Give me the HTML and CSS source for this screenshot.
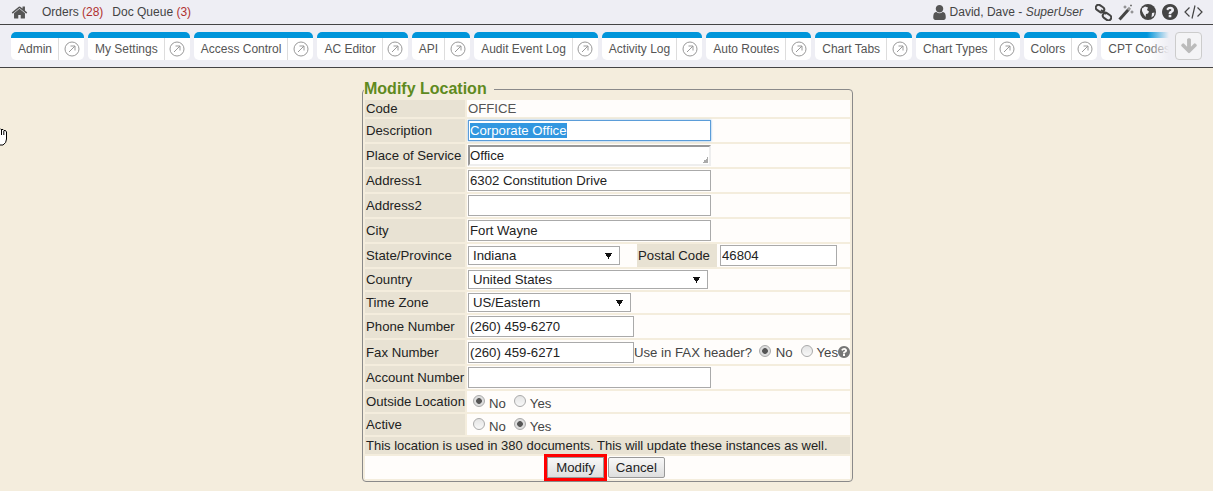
FILE: index.html
```html
<!DOCTYPE html>
<html>
<head>
    <meta charset="UTF-8">
    <link rel="stylesheet" href="styles.css">
</head>
<body>
    <div class="topbar">
        <div class="topbar-left">
            <svg class="home-icon" viewBox="0 0 1792 1792"><path d="M1472 992v480q0 26-19 45t-45 19h-384v-384h-256v384h-384q-26 0-45-19t-19-45v-480q0-1 .5-3t.5-3l575-474 575 474q1 2 1 6zm223-69l-62 74q-8 9-21 11h-3q-13 0-21-7l-692-577-692 577q-12 8-24 7-13-2-21-11l-62-74q-8-10-7-23.5t11-21.5l719-599q32-26 76-26t76 26l244 204v-195q0-14 9-23t23-9h192q14 0 23 9t9 23v408l219 182q10 8 11 21.5t-7 23.5z"/></svg>
            <a class="top-link">Orders <span class="count">(28)</span></a>
            <a class="top-link">Doc Queue <span class="count">(3)</span></a>
        </div>
        <div class="topbar-right">
            <svg class="user-icon" viewBox="256 128 1280 1536"><path d="M1536 1399q0 109-62.5 187t-150.5 78h-854q-88 0-150.5-78t-62.5-187q0-85 8.5-160.5t31.5-152 58.5-131 94-89 134.5-34.5q131 128 313 128t313-128q76 0 134.5 34.5t94 89 58.5 131 31.5 152 8.5 160.5zm-256-887q0 159-112.5 271.5t-271.5 112.5-271.5-112.5-112.5-271.5 112.5-271.5 271.5-112.5 271.5 112.5 112.5 271.5z"/></svg>
            <span class="user-name">David, Dave - <em>SuperUser</em></span>
            <div class="tools">
                <svg class="tool" width="17" height="17" viewBox="0 0 17 17"><g class="chain"><rect x="0.5" y="1.8" width="9" height="5.6" rx="2.8" transform="rotate(35 5 4.6)"/><rect x="7.5" y="9.8" width="9" height="5.6" rx="2.8" transform="rotate(35 12 12.6)"/><path d="M6 6l5 4"/></g></svg>
                <svg class="tool" width="16" height="17" viewBox="0 0 16 17"><path class="wand" d="M1.5 15.5L10.5 5.5"/><path class="wand-tip" d="M10 6L12 3.8"/><path class="spark" d="M7 1.5v3M5.5 3h3M14 6.500v3M12.500 8h3M13 .5v2M12 1.500h2"/></svg>
                <svg class="tool" width="16" height="16" viewBox="0 0 16 16"><circle cx="8" cy="8" r="8"/><path class="land" d="M2 4.500l3-2 3 1-1 2.500 2 1.500-1 2-2 .5-.5 3-2-3-1.500-3zM12 9l2.500-.5-.5 3-2.500 2z"/></svg>
                <svg class="tool" width="16" height="16" viewBox="128 128 1536 1536"><path d="M1024 1376v-192q0-14-9-23t-23-9h-192q-14 0-23 9t-9 23v192q0 14 9 23t23 9h192q14 0 23-9t9-23zm256-672q0-88-55.5-163t-138.5-116-170-41q-243 0-371 213-15 24 8 42l132 100q7 6 19 6 16 0 25-12 53-68 86-92 34-24 86-24 48 0 85.5 26t37.5 59q0 38-20 61t-68 45q-63 28-115.5 86.5t-52.5 125.500v36q0 14 9 23t23 9h192q14 0 23-9t9-23q0-19 21.500-49.500t54.500-49.500q32-18 49-28.500t46-35 44.500-48 28-60.500 12.500-81zm384 192q0 209-103 385.500t-279.500 279.500-385.500 103-385.500-103-279.500-279.500-103-385.500 103-385.500 279.500-279.500 385.500-103 385.500 103 279.500 279.500 103 385.500z"/></svg>
                <svg class="tool" width="19" height="16" viewBox="0 0 19 16"><path class="code" d="M5.500 3.500L1 8l4.500 4.500M13.500 3.500L18 8l-4.500 4.500M11 1.500L8 14.500"/></svg>
            </div>
        </div>
    </div>

    <div class="tabbar">
        <div class="tabs">
            <div class="tab"><span class="tab-name">Admin</span><span class="tab-open"><svg viewBox="0 0 16 16"><circle cx="8" cy="8" r="7"/><path d="M5 11l6-6M6.500 5H11v4.500"/></svg></span></div>
            <div class="tab"><span class="tab-name">My Settings</span><span class="tab-open"><svg viewBox="0 0 16 16"><circle cx="8" cy="8" r="7"/><path d="M5 11l6-6M6.500 5H11v4.500"/></svg></span></div>
            <div class="tab"><span class="tab-name">Access Control</span><span class="tab-open"><svg viewBox="0 0 16 16"><circle cx="8" cy="8" r="7"/><path d="M5 11l6-6M6.500 5H11v4.500"/></svg></span></div>
            <div class="tab"><span class="tab-name">AC Editor</span><span class="tab-open"><svg viewBox="0 0 16 16"><circle cx="8" cy="8" r="7"/><path d="M5 11l6-6M6.500 5H11v4.500"/></svg></span></div>
            <div class="tab"><span class="tab-name">API</span><span class="tab-open"><svg viewBox="0 0 16 16"><circle cx="8" cy="8" r="7"/><path d="M5 11l6-6M6.500 5H11v4.500"/></svg></span></div>
            <div class="tab"><span class="tab-name">Audit Event Log</span><span class="tab-open"><svg viewBox="0 0 16 16"><circle cx="8" cy="8" r="7"/><path d="M5 11l6-6M6.500 5H11v4.500"/></svg></span></div>
            <div class="tab"><span class="tab-name">Activity Log</span><span class="tab-open"><svg viewBox="0 0 16 16"><circle cx="8" cy="8" r="7"/><path d="M5 11l6-6M6.500 5H11v4.500"/></svg></span></div>
            <div class="tab"><span class="tab-name">Auto Routes</span><span class="tab-open"><svg viewBox="0 0 16 16"><circle cx="8" cy="8" r="7"/><path d="M5 11l6-6M6.500 5H11v4.500"/></svg></span></div>
            <div class="tab"><span class="tab-name">Chart Tabs</span><span class="tab-open"><svg viewBox="0 0 16 16"><circle cx="8" cy="8" r="7"/><path d="M5 11l6-6M6.500 5H11v4.500"/></svg></span></div>
            <div class="tab"><span class="tab-name">Chart Types</span><span class="tab-open"><svg viewBox="0 0 16 16"><circle cx="8" cy="8" r="7"/><path d="M5 11l6-6M6.500 5H11v4.500"/></svg></span></div>
            <div class="tab"><span class="tab-name">Colors</span><span class="tab-open"><svg viewBox="0 0 16 16"><circle cx="8" cy="8" r="7"/><path d="M5 11l6-6M6.500 5H11v4.500"/></svg></span></div>
            <div class="tab"><span class="tab-name">CPT Codes</span><span class="tab-open"><svg viewBox="0 0 16 16"><circle cx="8" cy="8" r="7"/><path d="M5 11l6-6M6.500 5H11v4.500"/></svg></span></div>
        </div>
        <button class="tabs-more"><svg viewBox="0 0 1792 1792"><path d="M1675 832q0 53-37 90l-651 652q-39 37-91 37-53 0-90-37l-651-652q-38-36-38-90 0-53 38-91l74-75q39-37 91-37 53 0 90 37l294 294v-704q0-52 38-90t90-38h128q52 0 90 38t38 90v704l294-294q37-37 90-37 52 0 91 37l75 75q37 39 37 91z"/></svg></button>
    </div>

    <svg class="hand-cursor" width="8" height="19" viewBox="0 0 8 19"><path d="M-3 .500h3l1 1 2 0 1 1 1.500 0 1 1.500v7q0 4-3.500 6h-6z"/><path d="M1.500 2v5M3.800 3v4"/></svg>

    <div class="content">
        <fieldset class="panel">
            <legend>Modify Location</legend>
            <table class="form-table">
                <tr class="row-code">
                    <td class="label">Code</td>
                    <td class="value code-value">OFFICE</td>
                </tr>
                <tr>
                    <td class="label">Description</td>
                    <td class="value"><input class="wide" id="description" type="text" value="Corporate Office"></td>
                </tr>
                <tr>
                    <td class="label">Place of Service</td>
                    <td class="value"><textarea class="wide" rows="1">Office</textarea></td>
                </tr>
                <tr>
                    <td class="label">Address1</td>
                    <td class="value"><input class="wide" type="text" value="6302 Constitution Drive"></td>
                </tr>
                <tr>
                    <td class="label">Address2</td>
                    <td class="value"><input class="wide" type="text"></td>
                </tr>
                <tr>
                    <td class="label">City</td>
                    <td class="value"><input class="wide" type="text" value="Fort Wayne"></td>
                </tr>
                <tr>
                    <td class="label">State/Province</td>
                    <td class="value">
                        <div class="state-row">
                            <select class="state"><option>Indiana</option></select>
                            <span class="postal-label">Postal Code</span>
                            <input class="postal" type="text" value="46804">
                        </div>
                    </td>
                </tr>
                <tr class="row-short">
                    <td class="label">Country</td>
                    <td class="value"><select class="country"><option>United States</option></select></td>
                </tr>
                <tr class="row-short">
                    <td class="label">Time Zone</td>
                    <td class="value"><select class="zone"><option>US/Eastern</option></select></td>
                </tr>
                <tr>
                    <td class="label">Phone Number</td>
                    <td class="value"><input class="phone" type="text" value="(260) 459-6270"></td>
                </tr>
                <tr class="row-fax">
                    <td class="label">Fax Number</td>
                    <td class="value">
                        <div class="fax-row">
                            <input class="phone" type="text" value="(260) 459-6271">
                            <span class="fax-text">Use in FAX header?</span>
                            <input class="radio fax-radio" type="radio" name="faxheader" checked><span>No</span>
                            <input class="radio fax-radio-yes" type="radio" name="faxheader"><span>Yes</span>
                            <svg class="help-icon" viewBox="128 128 1536 1536"><path d="M1024 1376v-192q0-14-9-23t-23-9h-192q-14 0-23 9t-9 23v192q0 14 9 23t23 9h192q14 0 23-9t9-23zm256-672q0-88-55.5-163t-138.5-116-170-41q-243 0-371 213-15 24 8 42l132 100q7 6 19 6 16 0 25-12 53-68 86-92 34-24 86-24 48 0 85.5 26t37.5 59q0 38-20 61t-68 45q-63 28-115.5 86.5t-52.5 125.500v36q0 14 9 23t23 9h192q14 0 23-9t9-23q0-19 21.500-49.500t54.500-49.500q32-18 49-28.500t46-35 44.500-48 28-60.500 12.500-81zm384 192q0 209-103 385.500t-279.500 279.500-385.500 103-385.500-103-279.500-279.500-103-385.500 103-385.500 279.500-279.500 385.500-103 385.500 103 279.500 279.500 103 385.500z"/></svg>
                        </div>
                    </td>
                </tr>
                <tr>
                    <td class="label">Account Number</td>
                    <td class="value"><input class="wide" type="text"></td>
                </tr>
                <tr class="row-short">
                    <td class="label">Outside Location</td>
                    <td class="value">
                        <div class="radio-row">
                            <input class="radio" type="radio" name="outside" checked><span>No</span>
                            <input class="radio second" type="radio" name="outside"><span>Yes</span>
                        </div>
                    </td>
                </tr>
                <tr class="row-short">
                    <td class="label">Active</td>
                    <td class="value">
                        <div class="radio-row">
                            <input class="radio" type="radio" name="active"><span>No</span>
                            <input class="radio second" type="radio" name="active" checked><span>Yes</span>
                        </div>
                    </td>
                </tr>
                <tr class="row-notice">
                    <td class="label notice" colspan="2">This location is used in 380 documents. This will update these instances as well.</td>
                </tr>
                <tr>
                    <td class="value actions" colspan="2">
                        <button class="btn btn-flagged">Modify</button>
                        <button class="btn">Cancel</button>
                    </td>
                </tr>
            </table>
        </fieldset>
    </div>

    <script>
        // the description field opens focused with its text selected
        document.getElementById('description').focus();
        document.getElementById('description').select();
    </script>
</body>
</html>
```

FILE: styles.css
```css
* {
    box-sizing: border-box;
}
body {
    margin: 0;
    background-color: #f4eddd;
    font-family: "Liberation Sans", Arial, sans-serif;
    font-size: 13.2px;
    color: #222;
    overflow: hidden;
}
.topbar {
    height: 25px;
    padding: 0 10px 0 11px;
    display: flex;
    justify-content: space-between;
    align-items: center;
    background-color: #eeeef4;
    border-bottom: 1px solid #444;
    font-size: 12px;
    color: #444;
}
.topbar-left,
.topbar-right {
    display: flex;
    align-items: center;
}
.home-icon {
    width: 17px;
    height: 17px;
    margin-right: 14px;
    fill: #555;
}
.top-link {
    margin-right: 9px;
}
.count {
    color: #b03030;
}
.user-icon {
    width: 13px;
    height: 15px;
    margin-right: 4px;
    fill: #555;
}
.user-name em {
    font-style: italic;
}
.tools {
    display: flex;
    align-items: center;
    gap: 6px;
    margin-left: 12px;
}
.tool {
    fill: #444;
}
.chain rect,
.chain path {
    fill: none;
    stroke: #444;
    stroke-width: 2;
}
.wand {
    fill: none;
    stroke: #444;
    stroke-width: 3;
}
.wand-tip {
    fill: none;
    stroke: #999;
    stroke-width: 3;
}
.spark {
    fill: none;
    stroke: #777;
    stroke-width: 1;
}
.land {
    fill: #eeeef4;
}
.code {
    fill: none;
    stroke: #444;
    stroke-width: 1.2;
}
.tabbar {
    height: 43px;
    padding: 7px 11px 0 11px;
    display: flex;
    background-color: #eeeef4;
    border-bottom: 1px solid #444;
}
.tabs {
    position: relative;
    width: 1159px;
    height: 28px;
    display: flex;
    gap: 4px;
    overflow: hidden;
}
.tabs::after {
    content: "";
    position: absolute;
    top: 0;
    right: 0;
    width: 22px;
    height: 100%;
    background: linear-gradient(to right, rgba(238,238,244,0), #eeeef4);
}
.tab {
    flex-shrink: 0;
    height: 28px;
    display: flex;
    background-color: #fff;
    border-top: 6px solid #0095da;
    border-radius: 5px;
    font-size: 12px;
    color: #555;
}
.tab-name {
    padding: 0 6px 0 7px;
    line-height: 22px;
    white-space: nowrap;
}
.tab-open {
    width: 26px;
    display: flex;
    justify-content: center;
    align-items: center;
    border-left: 1px solid #ddd;
}
.tab-open svg {
    width: 16px;
    height: 16px;
    fill: none;
    stroke: #999;
    stroke-width: 1;
}
.tabs-more {
    width: 27px;
    height: 28px;
    margin-left: 6px;
    padding: 0;
    display: flex;
    justify-content: center;
    align-items: center;
    background-color: #f4f4f6;
    border: 1px solid #ccc;
    border-radius: 4px;
}
.tabs-more svg {
    width: 18px;
    height: 18px;
    fill: #bbb;
}
.hand-cursor {
    position: absolute;
    top: 128px;
    left: 0;
}
.hand-cursor path {
    fill: #fff;
    stroke: #000;
    stroke-width: 1;
}
.content {
    display: flex;
    justify-content: center;
    padding: 12px 0 0 2px;
}
.panel {
    width: 491px;
    margin: 0;
    padding: 0;
    border: 1px solid #8a8a8a;
    border-radius: 4px;
}
.panel legend {
    margin-left: 1px;
    padding: 0 7px 0 0;
    font-size: 16px;
    font-weight: bold;
    line-height: 18px;
    color: #5f8a1e;
}
.form-table {
    width: 489px;
    table-layout: fixed;
    border-spacing: 2px;
    font-size: 13.2px;
}
.form-table td {
    height: 23px;
    padding: 0;
}
.form-table .row-fax td {
    height: 24px;
}
.form-table .row-code td {
    height: 17px;
}
.form-table .row-short td {
    height: 21px;
}
.form-table .row-notice td {
    height: 17px;
}
.label {
    width: 100px;
    padding-left: 1px !important;
    background-color: #e8e2d3;
    white-space: nowrap;
}
.value {
    padding-left: 1px !important;
    background-color: #fffdfb;
}
.code-value {
    color: #555;
}
input[type="text"],
textarea {
    display: block;
    height: 21px;
    padding: 0 1px;
    border: 1px solid #aaa;
    background-color: #fff;
    font-family: "Liberation Sans", Arial, sans-serif;
    font-size: 13.2px;
    color: #222;
    outline: none;
}
input[type="text"]::selection {
    background-color: #3297e0;
    color: #fff;
}
input[type="text"]:focus {
    border-color: #5b9dd9;
    box-shadow: 0 0 2px #7db4e6;
}
textarea {
    padding: 0;
    line-height: 17px;
    border: 2px solid;
    border-color: #999 #eee #eee #999;
    overflow: hidden;
    resize: none;
    background: linear-gradient(135deg, transparent 50%, #aaa 50%) no-repeat right 1px bottom 1px / 6px 6px, #fff;
}
select {
    display: block;
    height: 19px;
    padding: 0 0 0 4px;
    appearance: none;
    border: 1px solid #aaa;
    border-radius: 0;
    background: conic-gradient(from -30deg at 50% 100%, #111 60deg, transparent 0) no-repeat right 7px center / 7px 6px, #fff;
    font-family: "Liberation Sans", Arial, sans-serif;
    font-size: 13.2px;
    color: #222;
}
.wide {
    width: 243px;
}
.phone {
    width: 166px;
    flex-shrink: 0;
}
.state {
    width: 152px;
}
.country {
    width: 240px;
}
.zone {
    width: 163px;
}
.state-row {
    display: flex;
    align-items: center;
    height: 23px;
}
.postal-label {
    width: 80px;
    height: 23px;
    margin-left: 17px;
    padding-left: 1px;
    line-height: 23px;
    background-color: #e8e2d3;
    white-space: nowrap;
}
.postal {
    width: 117px;
    margin-left: 3px;
}
.fax-row {
    display: flex;
    align-items: center;
    color: #444;
    white-space: nowrap;
}
.radio {
    appearance: none;
    flex-shrink: 0;
    width: 12px;
    height: 12px;
    margin: 0 4px 2px 0;
    border: 1px solid #aaa;
    border-radius: 50%;
    background: linear-gradient(#e4e4e4, #f8f8f8);
}
.radio:checked {
    background: radial-gradient(circle, #555 0, #555 2.500px, #ddd 3.200px);
}
.fax-text {
    width: 126px;
}
.fax-radio {
    margin-right: 5px;
}
.fax-radio-yes {
    margin-left: 9px;
    margin-right: 3px;
}
.help-icon {
    flex-shrink: 0;
    width: 12px;
    height: 12px;
    fill: #777;
}
.radio-row {
    display: flex;
    align-items: center;
    padding-left: 5px;
    color: #444;
}
.radio-row span {
    padding-top: 3px;
}
.radio.second {
    margin-left: 8px;
}
.notice {
    font-size: 13px;
    color: #222;
}
.actions {
    padding-right: 4px !important;
    text-align: center;
}
.btn {
    width: 57px;
    height: 21px;
    padding: 0;
    background: linear-gradient(#f8f8f8, #dedede);
    border: 1px solid #999;
    border-radius: 2px;
    font-family: "Liberation Sans", Arial, sans-serif;
    font-size: 13.2px;
    color: #222;
}
.btn-flagged {
    border-radius: 0;
    outline: 3px solid #f00;
}
```
